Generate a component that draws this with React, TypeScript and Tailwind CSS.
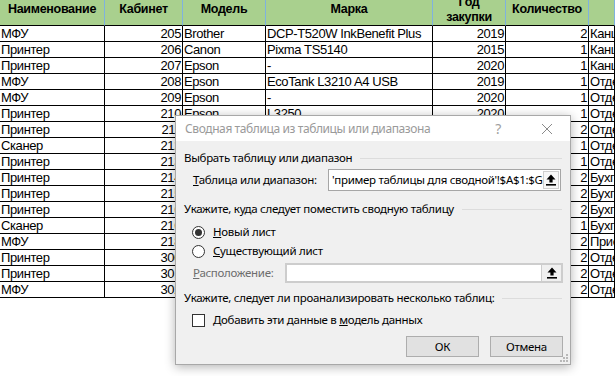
import React from "react";

const rows: string[][] = [
  ["МФУ", "205", "Brother", "DCP-T520W InkBenefit Plus", "2019", "2", "Канцелярия"],
  ["Принтер", "206", "Canon", "Pixma TS5140", "2015", "1", "Канцелярия"],
  ["Принтер", "207", "Epson", "-", "2020", "1", "Канцелярия"],
  ["МФУ", "208", "Epson", "EcoTank L3210 A4 USB", "2019", "1", "Отдел продаж"],
  ["МФУ", "209", "Epson", "-", "2020", "1", "Отдел продаж"],
  ["Принтер", "210", "Epson", "L3250", "2020", "1", "Отдел продаж"],
  ["Принтер", "211", "HP", "LaserJet Pro", "2018", "2", "Отдел продаж"],
  ["Сканер", "212", "Canon", "CanoScan", "2017", "1", "Отдел кадров"],
  ["Принтер", "213", "HP", "LaserJet", "2019", "1", "Отдел кадров"],
  ["Принтер", "214", "Brother", "HL-1110", "2016", "2", "Бухгалтерия"],
  ["Принтер", "215", "Brother", "HL-1110", "2016", "2", "Бухгалтерия"],
  ["Принтер", "216", "Canon", "i-SENSYS", "2018", "2", "Бухгалтерия"],
  ["Сканер", "216", "Epson", "Perfection", "2019", "1", "Бухгалтерия"],
  ["МФУ", "218", "Xerox", "B205", "2020", "2", "Приемная"],
  ["Принтер", "300", "HP", "LaserJet", "2017", "2", "Отдел закупок"],
  ["Принтер", "301", "HP", "LaserJet", "2017", "2", "Отдел закупок"],
  ["МФУ", "302", "Canon", "i-SENSYS", "2019", "2", "Отдел закупок"],
];

const right = [false, true, false, false, true, true, false];

function UpIcon() {
  return (
    <svg width="10" height="12" viewBox="0 0 10 12">
      <path d="M5 0.5 L9.5 5.5 H6.6 V8.6 H3.4 V5.5 H0.5 Z" fill="#000" />
      <rect x="0" y="10" width="10" height="1.6" fill="#000" />
    </svg>
  );
}

function SectionHeading({ text }: { text: string }) {
  return (
    <div className="flex items-center h-4 pl-2 pr-2">
      <span className="whitespace-nowrap">{text}</span>
      <div className="flex-1 ml-2 h-px bg-[#dcdcdc]" />
    </div>
  );
}

export default function App() {
  return (
    <div className="relative w-[615px] h-[376px] overflow-hidden bg-white" style={{ fontFamily: '"Liberation Sans", Arial, sans-serif' }}>
      <div className="grid grid-cols-[105px_78px_83px_167px_73px_83px_1fr] text-[13px] tracking-[-0.4px] text-black leading-4">
        {["Наименование", "Кабинет", "Модель", "Марка", "Год закупки", "Количество", ""].map((h, i) => (
          <div
            key={i}
            className="h-[26px] bg-[#a9d08e] border-b border-b-black border-r border-r-[#7fb2de] flex items-center justify-center pb-[6px] font-bold text-[12.5px] tracking-[-0.3px] overflow-hidden text-center leading-[15px] whitespace-nowrap"
          >
            {i === 4 ? (
              <div className="flex flex-col items-center">
                <span>Год</span>
                <span>закупки</span>
              </div>
            ) : (
              h
            )}
          </div>
        ))}
        {rows.map((r, ri) =>
          r.map((c, ci) => (
            <div
              key={ri + "-" + ci}
              className={
                "h-4 border-b border-r border-black px-[1px] whitespace-nowrap overflow-hidden leading-[16px] " +
                (right[ci] ? "text-right" : "text-left")
              }
            >
              {c}
            </div>
          ))
        )}
      </div>

      {/* Dialog */}
      <div
        className="absolute left-[175px] top-[115px] w-[396px] h-[250px] bg-[#f0f0f0] border border-[#a8a8a8] shadow-[0_2px_10px_rgba(0,0,0,0.3)] flex flex-col text-[11.5px] tracking-[-0.3px] text-black"
        style={{ fontFamily: '"Noto Sans", "Open Sans", sans-serif' }}
      >
        <div className="h-[25px] bg-white flex items-center pl-[9px] shrink-0">
          <span className="text-[#9a9a9a] text-[12px] tracking-[-0.4px]">Сводная таблица из таблицы или диапазона</span>
          <span className="ml-auto text-[#a0a0a0] text-[14px] mr-[40px]">?</span>
          <svg width="12" height="12" viewBox="0 0 12 12" className="mr-[17px]">
            <path d="M1 1 L11 11 M11 1 L1 11" stroke="#8a8a8a" strokeWidth="1" />
          </svg>
        </div>

        <div className="flex flex-col">
          <div className="mt-[9px]">
            <SectionHeading text="Выбрать таблицу или диапазон" />
          </div>
          <div className="mt-[3px] flex items-center h-[22px] pl-[17px] pr-[9px]">
            <span className="w-[135px] whitespace-nowrap">
              <span className="underline">Т</span>аблица или диапазон:
            </span>
            <div className="flex-1 h-[22px] border border-[#a6a6a6] bg-white flex items-center pl-[3px] overflow-hidden">
              <span className="flex-1 whitespace-nowrap overflow-hidden">'пример таблицы для сводной'!$A$1:$G$18</span>
              <div className="w-[16px] h-[18px] mr-[1px] border border-[#cfcfcf] bg-[#f7f7f7] flex items-center justify-center shrink-0">
                <UpIcon />
              </div>
            </div>
          </div>

          <div className="mt-[10px]">
            <SectionHeading text="Укажите, куда следует поместить сводную таблицу" />
          </div>
          <div className="mt-[7px] flex items-center h-4 pl-[16px]">
            <div className="w-[13px] h-[13px] rounded-full border border-[#333] bg-white flex items-center justify-center">
              <div className="w-[7px] h-[7px] rounded-full bg-[#333]" />
            </div>
            <span className="ml-[8px]">
              <span className="underline">Н</span>овый лист
            </span>
          </div>
          <div className="mt-[3px] flex items-center h-4 pl-[16px]">
            <div className="w-[13px] h-[13px] rounded-full border border-[#333] bg-white" />
            <span className="ml-[8px]">
              <span className="underline">С</span>уществующий лист
            </span>
          </div>
          <div className="mt-[4px] flex items-center h-[20px] pl-[17px] pr-[7px]">
            <span className="w-[92px] whitespace-nowrap text-[#6d6d6d]">
              <span className="underline">Р</span>асположение:
            </span>
            <div className="flex-1 h-[20px] border-2 border-[#cdcdcd] bg-white flex items-center justify-end">
              <div className="w-[20px] h-full bg-[#f0f0f0] border-l border-[#cdcdcd] flex items-center justify-center">
                <UpIcon />
              </div>
            </div>
          </div>

          <div className="mt-[7px]">
            <SectionHeading text="Укажите, следует ли проанализировать несколько таблиц:" />
          </div>
          <div className="mt-[6px] flex items-center h-4 pl-[16px]">
            <div className="w-[13px] h-[13px] border border-[#333] bg-white" />
            <span className="ml-[8px]">
              Добавить эти данные в <span className="underline">м</span>одель данных
            </span>
          </div>

          <div className="mt-[8px] flex justify-end pr-[7px] gap-[11px]">
            <button className="w-[73px] h-[21px] bg-[#e1e1e1] border border-[#adadad] flex items-center justify-center">
              ОК
            </button>
            <button className="w-[73px] h-[21px] bg-[#e1e1e1] border border-[#adadad] flex items-center justify-center">
              Отмена
            </button>
          </div>
        </div>

        <svg width="8" height="8" viewBox="0 0 8 8" className="absolute right-[2px] bottom-[2px]">
          <rect x="6" y="0" width="2" height="2" fill="#b8b8b8" />
          <rect x="3" y="3" width="2" height="2" fill="#b8b8b8" />
          <rect x="6" y="3" width="2" height="2" fill="#b8b8b8" />
          <rect x="0" y="6" width="2" height="2" fill="#b8b8b8" />
          <rect x="3" y="6" width="2" height="2" fill="#b8b8b8" />
          <rect x="6" y="6" width="2" height="2" fill="#b8b8b8" />
        </svg>
      </div>
    </div>
  );
}
